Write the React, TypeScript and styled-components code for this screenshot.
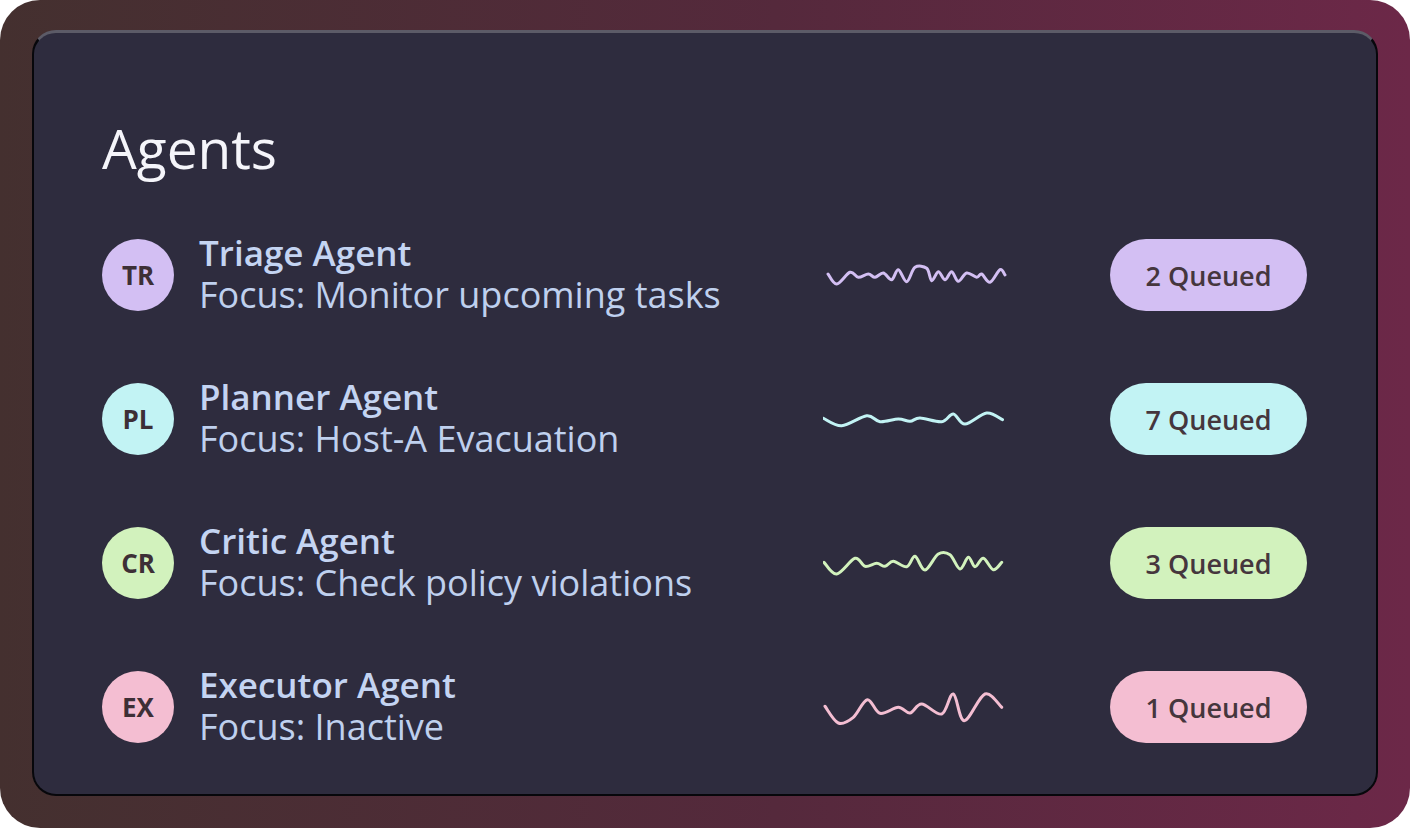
import styled, { createGlobalStyle } from 'styled-components';

type Pt = [number, number];

interface Agent {
  initials: string;
  name: string;
  focus: string;
  queued: number;
  tone: string;
  wave: Pt[];
}

const agents: Agent[] = [
  {
    initials: 'TR',
    name: 'Triage Agent',
    focus: 'Focus: Monitor upcoming tasks',
    queued: 2,
    tone: '#d3bff3',
    wave: [
      [5, 19], [13.7, 29], [27, 17.3], [35.3, 22.3], [45.3, 19], [52, 22.3], [60.3, 18],
      [68.7, 24.7], [75.3, 14.7], [83.7, 26.7], [92, 12.3], [103.7, 13.3], [108.7, 25.7],
      [115.3, 16.7], [122, 24.7], [128.7, 16.7], [135.3, 26.3], [143.7, 18], [153.7, 22.3],
      [158.7, 19], [167, 27.3], [177, 14.7], [182, 20],
    ],
  },
  {
    initials: 'PL',
    name: 'Planner Agent',
    focus: 'Focus: Host-A Evacuation',
    queued: 7,
    tone: '#c2f3f4',
    wave: [
      [0.5, 19.3], [18.7, 26.7], [43.7, 16.7], [57, 22.7], [75.3, 20], [87, 22.3], [97, 19],
      [118.7, 22.7], [130.3, 15], [142, 25], [163.7, 14], [179.5, 20.7],
    ],
  },
  {
    initials: 'CR',
    name: 'Critic Agent',
    focus: 'Focus: Check policy violations',
    queued: 3,
    tone: '#d2f2bd',
    wave: [
      [1, 19.3], [13.7, 31], [32, 15.3], [42, 23.3], [53.7, 20.3], [62, 23.3], [70.3, 18.3],
      [83.7, 23.7], [92, 13.3], [102, 27], [115.3, 11], [127, 11.7], [137, 26], [145.3, 14.3],
      [152, 23.7], [160.3, 15.3], [170.3, 26.7], [178.7, 19.3],
    ],
  },
  {
    initials: 'EX',
    name: 'Executor Agent',
    focus: 'Focus: Inactive',
    queued: 1,
    tone: '#f4bed2',
    wave: [
      [2, 19.3], [15.3, 36], [30.3, 30.3], [44.3, 12.7], [57, 26.3], [75.3, 20.3], [87, 26],
      [98.7, 17], [118.7, 27], [130.3, 7], [141.3, 33.7], [162, 7], [178.7, 20.3],
    ],
  },
];

// catmull-rom -> cubic bezier so the wave reads as a hand-drawn squiggle
const smoothPath = (pts: Pt[]) => {
  let d = `M${pts[0][0]},${pts[0][1]}`;
  for (let i = 0; i < pts.length - 1; i++) {
    const p0 = pts[i - 1] || pts[i];
    const p1 = pts[i];
    const p2 = pts[i + 1];
    const p3 = pts[i + 2] || p2;
    const c1x = p1[0] + (p2[0] - p0[0]) / 6;
    const c1y = p1[1] + (p2[1] - p0[1]) / 6;
    const c2x = p2[0] - (p3[0] - p1[0]) / 6;
    const c2y = p2[1] - (p3[1] - p1[1]) / 6;
    d += ` C${c1x.toFixed(1)},${c1y.toFixed(1)} ${c2x.toFixed(1)},${c2y.toFixed(1)} ${p2[0]},${p2[1]}`;
  }
  return d;
};

const App = () => {
  return (
    <>
      <GlobalStyle />
      <Frame>
        <Card>
          <Title>Agents</Title>
          <AgentList>
            {agents.map(agent => (
              <AgentRow key={agent.initials}>
                <Avatar $tone={agent.tone}>{agent.initials}</Avatar>
                <Info>
                  <Name>{agent.name}</Name>
                  <Focus>{agent.focus}</Focus>
                </Info>
                <Spark width="184" height="40" viewBox="0 0 184 40">
                  <path
                    d={smoothPath(agent.wave)}
                    fill="none"
                    stroke={agent.tone}
                    strokeWidth="3"
                    strokeLinecap="round"
                    strokeLinejoin="round"
                  />
                </Spark>
                <Badge $tone={agent.tone}>{agent.queued} Queued</Badge>
              </AgentRow>
            ))}
          </AgentList>
        </Card>
      </Frame>
    </>
  );
};

export default App;

const GlobalStyle = createGlobalStyle`
  html, body {
    margin: 0;
    padding: 0;
    background: #ffffff;
  }
  body {
    font-family: 'Open Sans', 'Noto Sans', sans-serif;
  }
`;

const Frame = styled.div`
  width: 1410px;
  height: 828px;
  box-sizing: border-box;
  padding: 30px 32px 32px 32px;
  border-radius: 40px;
  background: linear-gradient(90deg, #44302f 0%, #55293c 55%, #6c2848 100%);
`;

const Card = styled.section`
  box-sizing: border-box;
  height: 100%;
  padding: 87px 69px 0 68px;
  border: 2px solid #07070b;
  border-top: 3px solid #5c5b67;
  border-radius: 24px;
  background: #2e2c3e;
`;

const Title = styled.h1`
  margin: 0 0 56px 0;
  font-size: 55px;
  font-weight: 400;
  line-height: 56px;
  color: #f5f5fa;
`;

const AgentList = styled.div`
  display: flex;
  flex-direction: column;
  gap: 58px;
`;

const AgentRow = styled.div`
  display: flex;
  align-items: center;
  height: 86px;
`;

const Avatar = styled.div<{ $tone: string }>`
  flex: 0 0 72px;
  height: 72px;
  border-radius: 50%;
  display: flex;
  align-items: center;
  justify-content: center;
  background: ${props => props.$tone};
  color: #3d2f36;
  font-size: 26px;
  font-weight: 700;
`;

const Info = styled.div`
  flex: 1;
  margin-left: 25px;
  display: flex;
  flex-direction: column;
`;

const Name = styled.div`
  font-size: 35px;
  font-weight: 600;
  line-height: 40px;
  color: #c4d4f2;
`;

const Focus = styled.div`
  font-size: 36px;
  font-weight: 400;
  line-height: 44px;
  color: #bfd0ee;
`;

const Spark = styled.svg`
  flex: 0 0 184px;
  display: block;
`;

const Badge = styled.div<{ $tone: string }>`
  flex: 0 0 197px;
  height: 72px;
  margin-left: 103px;
  border-radius: 36px;
  display: flex;
  align-items: center;
  justify-content: center;
  background: ${props => props.$tone};
  color: #45363d;
  font-size: 27px;
  font-weight: 600;
`;
